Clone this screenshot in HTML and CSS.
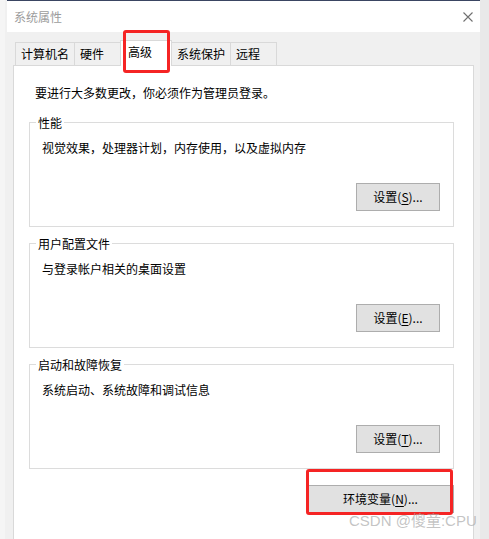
FILE: index.html
```html
<!DOCTYPE html>
<html lang="zh-CN">
<head>
<meta charset="utf-8">
<title>系统属性</title>
<link rel="stylesheet" href="styles.css">
</head>
<body>
<div class="screen">
  <div class="window">
    <div class="titlebar">
      <span class="title">系统属性</span>
      <svg class="close" width="10" height="10" viewBox="0 0 10 10"><path d="M0.5 0.5 L9.5 9.5 M9.5 0.5 L0.5 9.5" stroke="#707070" stroke-width="1.1" fill="none"/></svg>
    </div>
    <div class="wbody">
      <div class="tabs">
        <div class="tab">计算机名</div>
        <div class="tab">硬件</div>
        <div class="tab active">高级</div>
        <div class="tab">系统保护</div>
        <div class="tab">远程</div>
      </div>
      <div class="panel">
        <p class="intro">要进行大多数更改，你必须作为管理员登录。</p>
        <div class="group">
          <span class="legend">性能</span>
          <p class="desc">视觉效果，处理器计划，内存使用，以及虚拟内存</p>
          <button class="btn">设置(<u>S</u>)...</button>
        </div>
        <div class="group">
          <span class="legend">用户配置文件</span>
          <p class="desc">与登录帐户相关的桌面设置</p>
          <button class="btn">设置(<u>E</u>)...</button>
        </div>
        <div class="group">
          <span class="legend">启动和故障恢复</span>
          <p class="desc">系统启动、系统故障和调试信息</p>
          <button class="btn">设置(<u>T</u>)...</button>
        </div>
        <button class="btn env">环境变量(<u>N</u>)...</button>
      </div>
    </div>
  </div>
  <div class="mark mark-tab"></div>
  <div class="mark mark-env"></div>
  <div class="watermark">CSDN @傻童:CPU</div>
</div>
</body>
</html>
```
FILE: styles.css
```css
html, body {
  margin: 0;
  padding: 0;
}
body {
  background: linear-gradient(to right, #f5f5f5 0, #f5f5f5 5px, #e9e9e9 5px);
  font-family: "Noto Sans CJK SC", "Noto Sans", sans-serif;
  font-size: 12px;
  color: #000;
}
.screen {
  position: relative;
  width: 489px;
  height: 539px;
  overflow: hidden;
}
.window {
  margin-left: 5px;
  width: 475px;
  height: 539px;
  background: #f0f0f0;
}
.titlebar {
  margin-left: 2px;
  height: 31px;
  border-top: 1px solid #3a4562;
  background: #fff;
  display: flex;
  align-items: center;
  justify-content: space-between;
  padding: 0 7px 0 7px;
}
.title {
  color: #9c9c9c;
  font-size: 12px;
  line-height: 16px;
}
.close {
  display: block;
}
.tabs {
  height: 33px;
  display: flex;
  align-items: flex-end;
  padding-left: 10px;
}
.tab {
  box-sizing: border-box;
  min-width: 47px;
  height: 23px;
  padding: 0 5px;
  line-height: 22px;
  border: 1px solid #d9d9d9;
  border-bottom: none;
  background: #f0f0f0;
  margin-left: -1px;
  white-space: nowrap;
}
.tab:first-child {
  margin-left: 0;
}
.tab.active {
  position: relative;
  z-index: 1;
  min-width: 52px;
  height: 26px;
  padding: 0 5px 3px 7px;
  margin-bottom: -1px;
  background: #fff;
}
.panel {
  box-sizing: border-box;
  margin-left: 8px;
  width: 461px;
  height: 520px;
  border: 1px solid #d9d9d9;
  background: #fff;
  padding: 19px 19px 0 15px;
}
.intro {
  margin: 0 0 0 6px;
  line-height: 16px;
}
.group {
  box-sizing: border-box;
  height: 105px;
  margin-top: 16px;
  border: 1px solid #dcdcdc;
  display: flex;
  flex-direction: column;
  align-items: flex-start;
  padding: 0 13px 15px 0;
}
.intro + .group {
  margin-top: 21px;
}
.legend {
  display: block;
  margin: -8px 0 0 6px;
  padding: 0 2px;
  line-height: 16px;
  background: #fff;
}
.desc {
  margin: 9px 0 0 12px;
  line-height: 16px;
}
.btn {
  box-sizing: border-box;
  width: 84px;
  height: 28px;
  margin-top: auto;
  align-self: flex-end;
  border: 1px solid #adadad;
  background: #e1e1e1;
  font-family: "Noto Sans CJK SC", "Noto Sans", sans-serif;
  font-size: 12px;
  color: #000;
  padding: 0;
  line-height: 16px;
}
.btn u {
  text-underline-offset: 2px;
}
.btn.env {
  display: block;
  width: 147px;
  margin: 16px 0 0 auto;
}
.mark {
  position: absolute;
  z-index: 5;
  box-sizing: border-box;
  border: 3px solid #f52424;
  border-radius: 3px;
}
.mark-tab {
  left: 123px;
  top: 30px;
  width: 47px;
  height: 43px;
}
.mark-env {
  left: 306px;
  top: 469px;
  width: 147px;
  height: 46px;
}
.watermark {
  position: absolute;
  z-index: 6;
  left: 349px;
  top: 512px;
  font-family: "Liberation Sans", "Noto Sans CJK SC", sans-serif;
  font-size: 15px;
  line-height: 18px;
  color: rgba(170, 170, 170, 0.7);
  white-space: nowrap;
}
```
